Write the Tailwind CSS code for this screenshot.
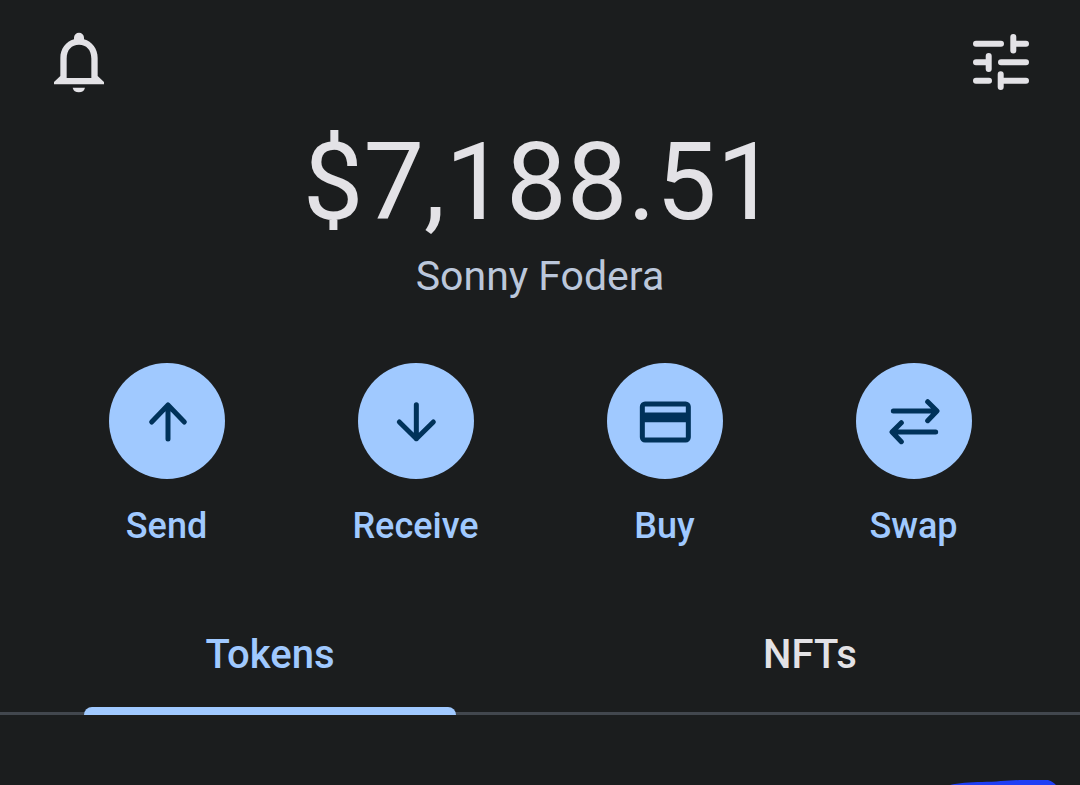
<!DOCTYPE html>
<html lang="en">

<head>
    <meta charset="UTF-8">
    <meta name="viewport" content="width=device-width, initial-scale=1.0">
    <title>Wallet</title>
    <script src="https://cdn.jsdelivr.net/npm/@tailwindcss/browser@4"></script>
</head>

<body class="flex min-h-screen flex-col overflow-hidden bg-[#1b1d1e] font-['Roboto',sans-serif] text-[#e3e2e6]">
    <!-- Top bar -->
    <header class="flex items-start justify-between pt-8 pr-[51px] pl-[52px]">
        <button type="button" aria-label="Notifications">
            <svg class="h-[62px] w-[54px]" viewBox="0 0 162 186" fill="currentColor">
                <path fill-rule="evenodd" d="M66 22V17a15 15 0 0 1 30 0v5c24 7 41 28 41 56v54l19 18v7H6v-7l19-18V78c0-28 17-49 41-56zM44 138h74V80c0-27-15-42-37-42S44 53 44 80z" />
                <path d="M62 167h37a19 18 0 0 1-37 0z" />
            </svg>
        </button>
        <button type="button" aria-label="Settings" class="pt-[2px]">
            <svg class="size-14" viewBox="0 0 56 56" fill="none" stroke="currentColor" stroke-width="6" stroke-linecap="round">
                <path d="M3 9.7H28M40.3 3V16.5M40.3 9.7H53M3 28.3H15.7M15.7 22V35M28 28.3H53M3 46.7H16M27.7 40.3V53M27.7 46.7H53" />
            </svg>
        </button>
    </header>

    <!-- Balance -->
    <section class="mt-8 text-center">
        <h1 class="text-[108px] leading-[112px]">$7,188.51</h1>
        <p class="mt-[14px] text-[41px] leading-[48px] text-[#bbc7db]">Sonny Fodera</p>
    </section>

    <!-- Actions -->
    <section class="mt-[63px] grid grid-cols-4 px-[42px] text-[36px] leading-10 font-medium text-[#a0c9ff]">
        <button type="button" class="flex flex-col items-center gap-[27px]">
            <span class="flex size-[116px] items-center justify-center rounded-full bg-[#a0c9ff] text-[#00325a]">
                <svg class="size-[52px]" viewBox="-78 -78 156 156" fill="none" stroke="currentColor" stroke-width="15" stroke-linecap="round" stroke-linejoin="round">
                    <path d="M3 54V-48M-46 3L3 -48L52 3" />
                </svg>
            </span>
            <span>Send</span>
        </button>
        <button type="button" class="flex flex-col items-center gap-[27px]">
            <span class="flex size-[116px] items-center justify-center rounded-full bg-[#a0c9ff] text-[#00325a]">
                <svg class="size-[52px]" viewBox="-78 -78 156 156" fill="none" stroke="currentColor" stroke-width="15" stroke-linecap="round" stroke-linejoin="round">
                    <path d="M1 -49V53M-50 3L1 53L52 3" />
                </svg>
            </span>
            <span>Receive</span>
        </button>
        <button type="button" class="flex flex-col items-center gap-[27px]">
            <span class="flex size-[116px] items-center justify-center rounded-full bg-[#a0c9ff] text-[#00325a]">
                <svg class="size-[52px]" viewBox="-78 -78 156 156" fill="none" stroke="currentColor" stroke-width="15">
                    <rect x="-68" y="-51" width="138" height="108" rx="8" />
                    <path stroke-width="29" d="M-68 -11H70" />
                </svg>
            </span>
            <span>Buy</span>
        </button>
        <button type="button" class="flex flex-col items-center gap-[27px]">
            <span class="flex size-[116px] items-center justify-center rounded-full bg-[#a0c9ff] text-[#00325a]">
                <svg class="size-[52px]" viewBox="-78 -78 156 156" fill="none" stroke="currentColor" stroke-width="15" stroke-linecap="round" stroke-linejoin="round">
                    <path d="M-62 -30H68M41 -58L69 -30L41 -1M65 33H-65M-38 5L-66 33L-38 62" />
                </svg>
            </span>
            <span>Swap</span>
        </button>
    </section>

    <!-- Tabs -->
    <nav class="mt-[85px] grid grid-cols-2 bg-linear-to-t from-[#42474e] from-[3px] to-transparent to-[3px] text-[40px] leading-[48px] font-medium" role="tablist">
        <button type="button" role="tab" aria-selected="true" class="flex flex-col items-center gap-7 text-[#a0c9ff]">
            <span>Tokens</span>
            <span class="h-2 w-[372px] rounded-t-lg bg-[#a0c9ff]"></span>
        </button>
        <button type="button" role="tab" aria-selected="false" class="flex flex-col items-center">NFTs</button>
    </nav>

    <!-- Marker stroke at the top of the token list -->
    <svg class="mt-auto mr-6 h-[5px] w-[106px] self-end" viewBox="0 0 106 5" fill="#1f3ff5">
        <path d="M0 5C8 3 20 2 32 2C48 2 60 0 74 0H98C102 1 104 3 106 5z" />
    </svg>
</body>

</html>
